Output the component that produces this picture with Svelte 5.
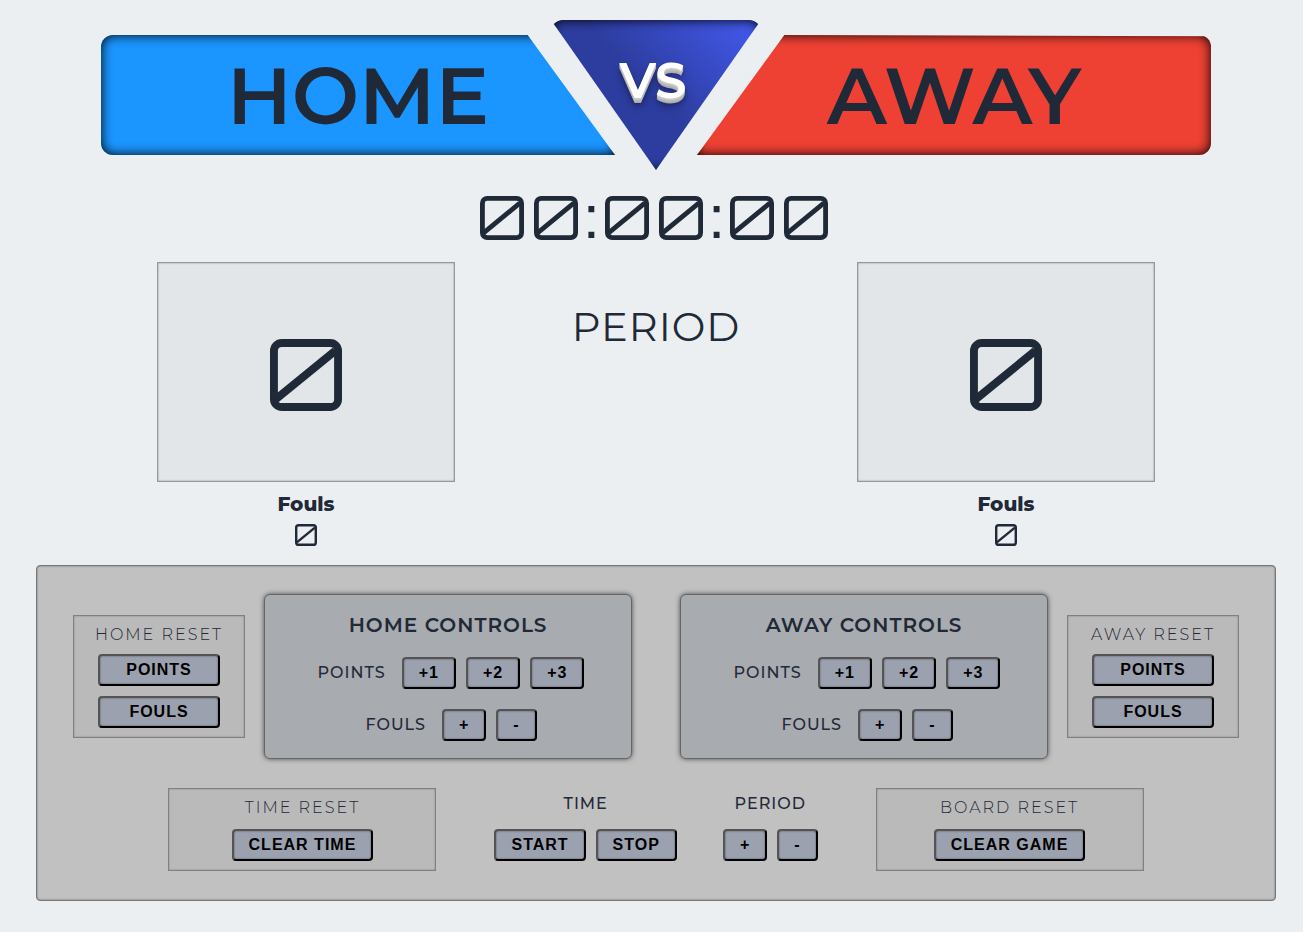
<script>
  let score = $state({ home: 0, away: 0 });
  let fouls = $state({ home: 0, away: 0 });
  let period = $state(0);
  let seconds = $state(0);
  let timer = null;

  const teams = ['home', 'away'];

  let clock = $derived(
    [Math.floor(seconds / 3600), Math.floor(seconds / 60) % 60, seconds % 60]
      .map((part) => String(part).padStart(2, '0'))
  );

  function start() {
    if (!timer) timer = setInterval(() => (seconds += 1), 1000);
  }

  function stop() {
    clearInterval(timer);
    timer = null;
  }

  function clearTime() {
    stop();
    seconds = 0;
  }

  function clearGame() {
    clearTime();
    period = 0;
    for (const team of teams) {
      score[team] = 0;
      fouls[team] = 0;
    }
  }
</script>

{#snippet digits(value)}
  {#each String(value) as digit}
    {#if digit === '0'}
      <svg class="zero" viewBox="0 0 73 73" role="img" aria-label="0">
        <rect x="4" y="4" width="65" height="65" rx="8" />
        <line x1="6" y1="61" x2="66" y2="12" />
      </svg>
    {:else}
      <span class="digit">{digit}</span>
    {/if}
  {/each}
{/snippet}

{#snippet teamReset(team)}
  <section class="reset side">
    <h3>{team.toUpperCase()} RESET</h3>
    <button onclick={() => (score[team] = 0)}>POINTS</button>
    <button onclick={() => (fouls[team] = 0)}>FOULS</button>
  </section>
{/snippet}

{#snippet teamControls(team)}
  <section class="controls">
    <h2>{team.toUpperCase()} CONTROLS</h2>
    <div class="line">
      <span class="label">POINTS</span>
      {#each [1, 2, 3] as points}
        <button onclick={() => (score[team] += points)}>+{points}</button>
      {/each}
    </div>
    <div class="line">
      <span class="label">FOULS</span>
      <button onclick={() => (fouls[team] += 1)}>+</button>
      <button onclick={() => (fouls[team] = Math.max(0, fouls[team] - 1))}>-</button>
    </div>
  </section>
{/snippet}

{#snippet teamScore(team)}
  <section class="team">
    <div class="score">{@render digits(score[team])}</div>
    <h3>Fouls</h3>
    <div class="fouls">{@render digits(fouls[team])}</div>
  </section>
{/snippet}

<main>
  <header>
    <h1 class="banner home">HOME</h1>
    <div class="versus"><span>VS</span></div>
    <h1 class="banner away">AWAY</h1>
  </header>

  <div class="clock">
    {#each clock as part, i}
      {#if i > 0}<span class="colon">:</span>{/if}
      {@render digits(part)}
    {/each}
  </div>

  <div class="board">
    {@render teamScore('home')}
    <section class="period">
      <h2>PERIOD</h2>
      {#if period > 0}<p>{period}</p>{/if}
    </section>
    {@render teamScore('away')}
  </div>

  <div class="panel">
    <div class="row upper">
      {@render teamReset('home')}
      <div class="pair">
        {@render teamControls('home')}
        {@render teamControls('away')}
      </div>
      {@render teamReset('away')}
    </div>
    <div class="row lower">
      <section class="reset wide">
        <h3>TIME RESET</h3>
        <button onclick={clearTime}>CLEAR TIME</button>
      </section>
      <div class="groups">
        <section class="group">
          <span class="label">TIME</span>
          <div class="line">
            <button onclick={start}>START</button>
            <button onclick={stop}>STOP</button>
          </div>
        </section>
        <section class="group">
          <span class="label">PERIOD</span>
          <div class="line">
            <button onclick={() => (period += 1)}>+</button>
            <button onclick={() => (period = Math.max(0, period - 1))}>-</button>
          </div>
        </section>
      </div>
      <section class="reset wide">
        <h3>BOARD RESET</h3>
        <button onclick={clearGame}>CLEAR GAME</button>
      </section>
    </div>
  </div>
</main>

<style>
  :global(body) {
    margin: 0;
    background: #ebeff2;
  }

  main {
    padding: 20px 27px 31px 36px;
    color: #1f2937;
    font-family: Montserrat, Inter, sans-serif;
  }

  h1,
  h2,
  h3,
  p {
    margin: 0;
  }

  header {
    display: flex;
    align-items: center;
    padding: 0 65px;
  }

  .banner {
    flex: 1;
    box-sizing: border-box;
    height: 120px;
    line-height: 122px;
    text-align: center;
    font-size: 80px;
    font-weight: 600;
    box-shadow: inset 0 0 12px #000;
  }

  .home {
    background: #1b95ff;
    border-radius: 12px 0 0 12px;
    clip-path: polygon(0 0, 83% 0, 100% 100%, 0 100%);
  }

  .away {
    background: #ee4134;
    border-radius: 0 12px 12px 0;
    clip-path: polygon(17% 0, 100% 1%, 100% 100%, 0 100%);
  }

  .versus {
    flex: none;
    box-sizing: border-box;
    width: 210px;
    height: 150px;
    margin: 0 -64px;
    padding: 31px 6px 0 0;
    text-align: center;
    color: #fff;
    font-size: 50px;
    line-height: 60px;
    font-weight: 600;
    background: linear-gradient(45deg, #2d3d9f 50%, #445bf2);
    border-radius: 12px;
    box-shadow: inset 0 0 12px #000;
    clip-path: polygon(0 0, 100% 0, 50% 100%);
    text-shadow: 0 1px 0 #ccc, 0 2px 0 #c4c4c4, 0 3px 0 #bbb, 0 4px 0 #b2b2b2,
      0 5px 0 #aaa, 0 6px 4px rgba(0, 0, 0, 0.3), 0 8px 10px rgba(0, 0, 0, 0.3);
  }

  .zero {
    flex: none;
    display: block;
    width: 1em;
    height: 1em;
    fill: none;
    stroke: currentColor;
    stroke-width: 8;
  }

  .digit {
    line-height: 1;
  }

  .clock {
    display: flex;
    justify-content: center;
    align-items: center;
    height: 44px;
    margin-top: 26px;
    padding-right: 4px;
    font-size: 44px;
  }

  .clock .zero,
  .clock .digit {
    margin: 0 5px;
  }

  .colon {
    padding-bottom: 2px;
    font-family: "Liberation Sans", Arial, sans-serif;
    font-size: 62px;
    line-height: 44px;
  }

  .board {
    display: grid;
    grid-template-columns: repeat(3, 1fr);
    padding: 0 95px;
    margin-top: 22px;
  }

  .team {
    display: flex;
    flex-direction: column;
    align-items: center;
    padding: 0 26px;
  }

  .team h3 {
    margin-top: 10px;
    font-size: 20px;
    line-height: 24px;
    font-weight: 800;
  }

  .score {
    display: flex;
    align-items: center;
    justify-content: center;
    gap: 12px;
    align-self: stretch;
    padding: 76px 0 70px;
    border: 1px solid #96999c;
    background: #e2e6e9;
    box-shadow: inset 0 0 2px rgba(0, 0, 0, 0.4);
    font-size: 72px;
    font-weight: 600;
  }

  .fouls {
    display: flex;
    gap: 4px;
    margin-top: 8px;
    font-size: 22px;
  }

  .period {
    padding-top: 40px;
    text-align: center;
    font-size: 40px;
  }

  .period h2 {
    font-size: 40px;
    line-height: 50px;
    font-weight: 400;
    letter-spacing: 1px;
  }

  .panel {
    display: flex;
    flex-direction: column;
    gap: 29px;
    margin-top: 19px;
    padding: 28px 36px 29px;
    border: 1px solid #777;
    border-radius: 4px;
    background: #c1c1c1;
    box-shadow: inset 0 0 2px rgba(0, 0, 0, 0.5);
  }

  .row {
    display: flex;
    align-items: center;
    justify-content: center;
  }

  .upper {
    justify-content: space-between;
  }

  .lower {
    gap: 58px;
  }

  .pair {
    display: flex;
    gap: 48px;
  }

  .groups {
    display: flex;
    gap: 46px;
    padding-bottom: 5px;
  }

  .reset {
    display: flex;
    flex-direction: column;
    align-items: center;
    gap: 10px;
    box-sizing: border-box;
    padding: 9px 24px;
    border: 1px solid #808080;
    background: #bababa;
    box-shadow: inset 0 0 2px rgba(0, 0, 0, 0.3);
  }

  .side {
    align-items: stretch;
    width: 172px;
    text-align: center;
  }

  .wide {
    width: 268px;
  }

  .reset h3 {
    font-size: 16px;
    line-height: 19px;
    font-weight: 300;
    letter-spacing: 2px;
    white-space: nowrap;
  }

  .side h3 {
    margin: 0 -24px;
  }

  .wide h3 {
    margin-bottom: 2px;
  }

  .controls {
    display: flex;
    flex-direction: column;
    align-items: center;
    gap: 20px;
    box-sizing: border-box;
    width: 368px;
    padding: 18px 0 17px;
    border: 1px solid #666;
    border-radius: 6px;
    background: #a8abaf;
    box-shadow: 0 0 5px rgba(0, 0, 0, 0.6);
  }

  .controls h2 {
    font-size: 20px;
    line-height: 24px;
    font-weight: 600;
    letter-spacing: 1px;
  }

  .line {
    display: flex;
    align-items: center;
    gap: 10px;
  }

  .label {
    font-size: 16px;
    line-height: 20px;
    font-weight: 500;
    letter-spacing: 1px;
  }

  .controls .label {
    margin: 0 6px;
  }

  .group {
    display: flex;
    flex-direction: column;
    align-items: center;
    gap: 15px;
  }

  button {
    padding: 5px 15px;
    border: 2px outset #000;
    border-radius: 4px;
    background: #9ca1af;
    box-shadow: inset 0 0 2px rgba(0, 0, 0, 0.5);
    color: #000;
    font: bold 16px/18px "Liberation Sans", Arial, sans-serif;
    letter-spacing: 1px;
    cursor: pointer;
  }
</style>
